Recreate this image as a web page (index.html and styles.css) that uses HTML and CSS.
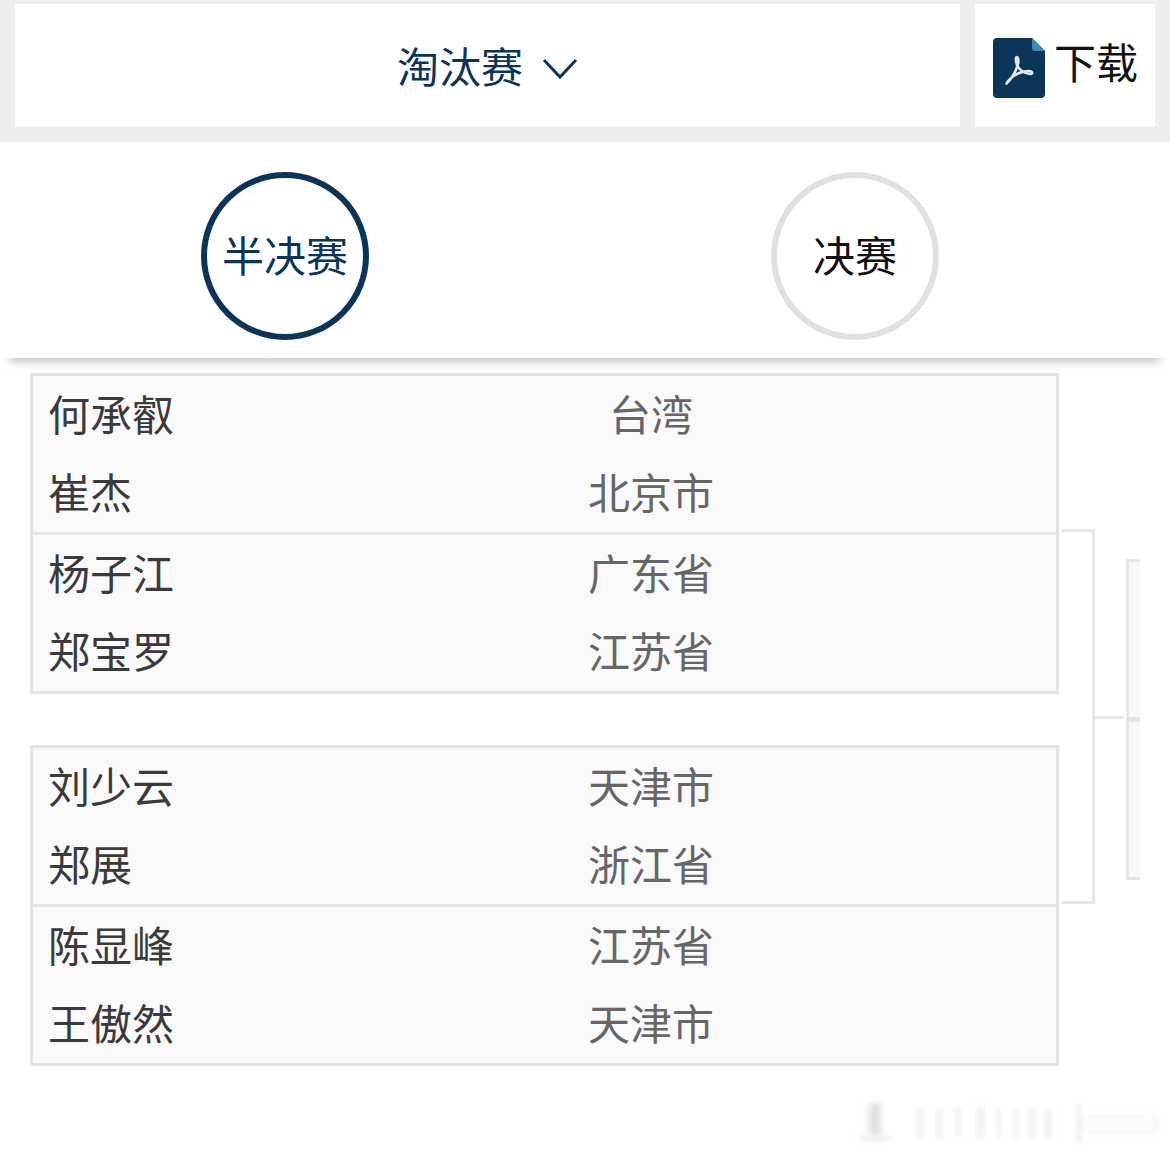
FILE: index.html
```html
<!DOCTYPE html>
<html lang="zh">
<head>
<meta charset="utf-8">
<title>淘汰赛</title>
<link rel="stylesheet" href="styles.css">
</head>
<body>
<header class="topbar">
  <div class="select"><span>淘汰赛</span>
    <svg class="chev" width="36" height="24" viewBox="0 0 36 24"><path d="M2 3 L18 20 L34 3" fill="none" stroke="#0b3558" stroke-width="3"/></svg>
  </div>
  <div class="download">
    <svg class="pdf" width="52" height="60" viewBox="0 0 52 60">
      <path d="M4 0H39L52 13V56a4 4 0 0 1-4 4H4a4 4 0 0 1-4-4V4a4 4 0 0 1 4-4z" fill="#0b3558"/>
      <path d="M39 0L52 13H42a3 3 0 0 1-3-3z" fill="#3f87bd"/>
      <path d="M14 45C19 40 23 33 25 26C26 22 25 19 24 19C22.500 19 22.500 23 24 27C26 32 31 35 37 36C40 36.500 40 33 36 33C30 33 21 36 16 42C13.500 45 13 46.500 14 45Z" fill="none" stroke="#dfe8ef" stroke-width="2.600"/>
    </svg>
    <span>下载</span>
  </div>
</header>

<nav class="tabs">
  <div class="tab-cell"><div class="tab active">半决赛</div></div>
  <div class="tab-cell"><div class="tab">决赛</div></div>
</nav>

<main class="bracket">
  <section class="round">
    <div class="group">
      <div class="match">
        <div class="row"><span>何承叡</span><span class="place">台湾</span></div>
        <div class="row"><span>崔杰</span><span class="place">北京市</span></div>
      </div>
      <div class="match">
        <div class="row"><span>杨子江</span><span class="place">广东省</span></div>
        <div class="row"><span>郑宝罗</span><span class="place">江苏省</span></div>
      </div>
    </div>
    <div class="group">
      <div class="match">
        <div class="row"><span>刘少云</span><span class="place">天津市</span></div>
        <div class="row"><span>郑展</span><span class="place">浙江省</span></div>
      </div>
      <div class="match">
        <div class="row"><span>陈显峰</span><span class="place">江苏省</span></div>
        <div class="row"><span>王傲然</span><span class="place">天津市</span></div>
      </div>
    </div>
  </section>
  <div class="connector"></div>
  <section class="final">
    <div class="final-box"></div>
    <div class="final-box"></div>
  </section>
</main>

<svg class="watermark" width="330" height="64" viewBox="0 0 330 64">
  <defs>
    <filter id="b" x="-10%" y="-30%" width="120%" height="160%"><feGaussianBlur stdDeviation="2"/></filter>
    <linearGradient id="cup" x1="0" x2="1" y1="0" y2="0">
      <stop offset="0" stop-color="#fff"/><stop offset=".5" stop-color="#dcdcdc"/><stop offset="1" stop-color="#fff"/>
    </linearGradient>
  </defs>
  <g filter="url(#b)">
    <path d="M24 14V46H46V12" fill="url(#cup)"/>
    <path d="M20 47Q34 54 50 47" fill="none" stroke="#d4d4d4" stroke-width="1.500"/>
    <g fill="#f3f3f3">
      <rect x="77" y="18" width="7" height="30"/><rect x="96" y="18" width="7" height="30"/>
      <rect x="114" y="18" width="7" height="30"/><rect x="136" y="16" width="9" height="32"/>
      <rect x="157" y="18" width="4" height="30"/><rect x="174" y="18" width="4" height="30"/>
      <rect x="189" y="18" width="7" height="30"/><rect x="204" y="20" width="9" height="28"/>
    </g>
    <rect x="238" y="14" width="2" height="38" fill="#dedede"/>
    <rect x="242" y="27" width="76" height="15" rx="7" fill="#fdfdfd" stroke="#e8e8e8" stroke-width="1.200"/>
  </g>
</svg>
</body>
</html>
```

FILE: styles.css
```css
* { box-sizing: border-box; }
html, body { margin: 0; padding: 0; }
body {
  position: relative;
  width: 1170px;
  height: 1154px;
  overflow: hidden;
  background: #fff;
  font-family: "Noto Sans CJK SC", "Noto Sans", sans-serif;
  font-weight: 400;
  font-size: 42px;
}
.topbar {
  display: flex;
  gap: 15px;
  height: 142px;
  padding: 4px 15px 15px;
  background: #eeeeee;
}
.select {
  flex: 1;
  display: flex;
  align-items: center;
  justify-content: center;
  gap: 19px;
  background: #fff;
  color: #0b3558;
}
.select span { margin-top: -2px; }
.chev { margin-top: 7px; }
.download {
  width: 180px;
  display: flex;
  align-items: center;
  gap: 9px;
  padding-left: 18px;
  background: #fff;
  color: #111;
}
.download span { margin-top: -10px; }
.pdf { margin-top: 5px; }
.tabs {
  display: grid;
  grid-template-columns: 570px 570px;
  height: 216px;
  padding-top: 30px;
  background: #fff;
  box-shadow: 0 14px 8px -10px rgba(0, 0, 0, .22);
}
.tab-cell { display: flex; justify-content: center; align-items: flex-start; }
.tab {
  width: 168px;
  height: 168px;
  padding-bottom: 6px;
  border-radius: 50%;
  border: 6px solid #e0e0e0;
  display: flex;
  align-items: center;
  justify-content: center;
  color: #111;
}
.tab.active { border-color: #0b3558; color: #0b3558; }
.bracket {
  display: flex;
  align-items: flex-start;
  padding: 15px 0 0 30px;
}
.round { width: 1029px; flex: none; }
.group + .group { margin-top: 51px; }
.match {
  border: 3px solid #e4e4e4;
  background: #f9f9f9;
}
.match + .match { margin-top: -3px; }
.row {
  display: grid;
  grid-template-columns: 453px 300px;
  height: 78px;
  line-height: 74px;
  color: #3a3a3a;
  padding-left: 15px;
}
.place { color: #666; text-align: center; }
.connector {
  position: relative;
  flex: none;
  width: 33px;
  height: 375px;
  margin: 156px 0 0 3px;
  border: solid #e6e6e6;
  border-width: 3px 3px 3px 0;
}
.connector::after {
  content: "";
  position: absolute;
  left: 100%;
  top: 184px;
  width: 31px;
  height: 3px;
  background: #e6e6e6;
}
.final { flex: none; width: 44px; margin: 186px 0 0 31px; }
.final-box {
  width: 14px;
  height: 161px;
  background: #f9f9f9;
  border: solid #e6e6e6;
  border-width: 3px 0 3px 3px;
}
.final-box + .final-box { margin-top: -1px; }
.watermark {
  position: absolute;
  left: 840px;
  top: 1090px;
}
```
